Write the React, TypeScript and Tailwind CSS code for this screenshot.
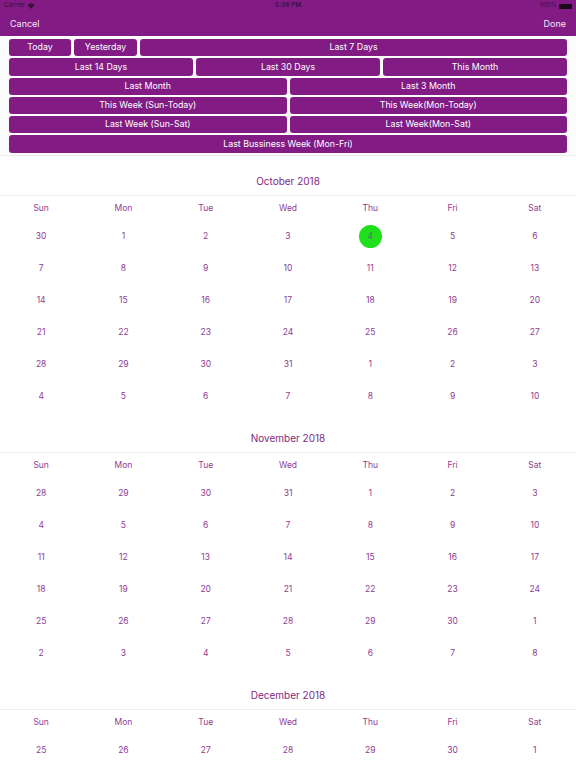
import React from "react";

const P = "bg-[#821c84]";

function Btn({ label, className = "" }: { label: string; className?: string }) {
  return (
    <div
      className={`h-[17.3px] ${P} rounded-[3px] flex items-center justify-center text-white text-[8.8px] leading-none ${className}`}
    >
      {label}
    </div>
  );
}

type Month = { title: string; rows: number[][]; today?: number };

const months: Month[] = [
  {
    title: "October 2018",
    rows: [
      [30, 1, 2, 3, 4, 5, 6],
      [7, 8, 9, 10, 11, 12, 13],
      [14, 15, 16, 17, 18, 19, 20],
      [21, 22, 23, 24, 25, 26, 27],
      [28, 29, 30, 31, 1, 2, 3],
      [4, 5, 6, 7, 8, 9, 10],
    ],
    today: 4,
  },
  {
    title: "November 2018",
    rows: [
      [28, 29, 30, 31, 1, 2, 3],
      [4, 5, 6, 7, 8, 9, 10],
      [11, 12, 13, 14, 15, 16, 17],
      [18, 19, 20, 21, 22, 23, 24],
      [25, 26, 27, 28, 29, 30, 1],
      [2, 3, 4, 5, 6, 7, 8],
    ],
  },
  {
    title: "December 2018",
    rows: [
      [25, 26, 27, 28, 29, 30, 1],
      [2, 3, 4, 5, 6, 7, 8],
      [9, 10, 11, 12, 13, 14, 15],
      [16, 17, 18, 19, 20, 21, 22],
      [23, 24, 25, 26, 27, 28, 29],
      [30, 31, 1, 2, 3, 4, 5],
    ],
  },
];

const days = ["Sun", "Mon", "Tue", "Wed", "Thu", "Fri", "Sat"];

function MonthBlock({ m }: { m: Month }) {
  return (
    <div className="pt-[12px]">
      <div className="h-[28px] border-b border-[#ededed] flex items-center justify-center text-[10px] text-[#7e2a82]">
        {m.title}
      </div>
      <div className="grid grid-cols-7 h-[25px] items-center">
        {days.map((d) => (
          <div key={d} className="text-center text-[8.5px] text-[#8e3c92]">
            {d}
          </div>
        ))}
      </div>
      {m.rows.map((r, ri) => (
        <div key={ri} className="grid grid-cols-7 h-[32px] items-center">
          {r.map((d, ci) => {
            const isToday = m.today !== undefined && ri === 0 && ci === 4;
            return (
              <div key={ci} className="flex justify-center">
                {isToday ? (
                  <div className="w-[23px] h-[23px] rounded-full bg-[#1fe01a] flex items-center justify-center text-[8.5px] text-[#6a6a6a]">
                    {d}
                  </div>
                ) : (
                  <span className="text-[8.5px] text-[#8e3c92]">{d}</span>
                )}
              </div>
            );
          })}
        </div>
      ))}
    </div>
  );
}

export default function App() {
  return (
    <div
      className="w-[576px] h-[768px] overflow-hidden bg-white"
      style={{ fontFamily: "Inter, 'Noto Sans', sans-serif" }}
    >
      <div className={`${P} h-[36px] relative`}>
        <div className="h-[12px] flex items-center justify-between px-[4px] text-[6.5px] text-[#3a123c]">
          <div className="flex items-center gap-[2px] w-[80px]">
            <span>Carrier</span>
            <svg width="8" height="6" viewBox="0 0 16 12">
              <path d="M8 12 L1 4 A10 10 0 0 1 15 4 Z" fill="#3a123c" />
            </svg>
          </div>
          <div className="font-semibold">5:38 PM</div>
          <div className="flex items-center gap-[2px] w-[80px] justify-end">
            <span>100%</span>
            <div className="w-[13px] h-[5px] bg-[#1a0a1a] rounded-[1px]" />
          </div>
        </div>
        <div className="h-[24px] flex items-center justify-between px-[10px] text-[9px] text-[#f4e6f4]">
          <span>Cancel</span>
          <span>Done</span>
        </div>
      </div>
      <div className="px-[9px] pt-[3px] pb-[2px] flex flex-col gap-[2px] border-b border-[#ececec] bg-[#fcfcfc]">
        <div className="flex gap-[3px]">
          <Btn label="Today" className="w-[62px]" />
          <Btn label="Yesterday" className="w-[63px]" />
          <Btn label="Last 7 Days" className="flex-1" />
        </div>
        <div className="flex gap-[3px]">
          <Btn label="Last 14 Days" className="flex-1" />
          <Btn label="Last 30 Days" className="flex-1" />
          <Btn label="This Month" className="flex-1" />
        </div>
        <div className="flex gap-[3px]">
          <Btn label="Last Month" className="flex-1" />
          <Btn label="Last 3 Month" className="flex-1" />
        </div>
        <div className="flex gap-[3px]">
          <Btn label="This Week (Sun-Today)" className="flex-1" />
          <Btn label="This Week(Mon-Today)" className="flex-1" />
        </div>
        <div className="flex gap-[3px]">
          <Btn label="Last Week (Sun-Sat)" className="flex-1" />
          <Btn label="Last Week(Mon-Sat)" className="flex-1" />
        </div>
        <div className="flex gap-[3px]">
          <Btn label="Last Bussiness Week (Mon-Fri)" className="flex-1" />
        </div>
      </div>
      {months.map((m) => (
        <MonthBlock key={m.title} m={m} />
      ))}
    </div>
  );
}
